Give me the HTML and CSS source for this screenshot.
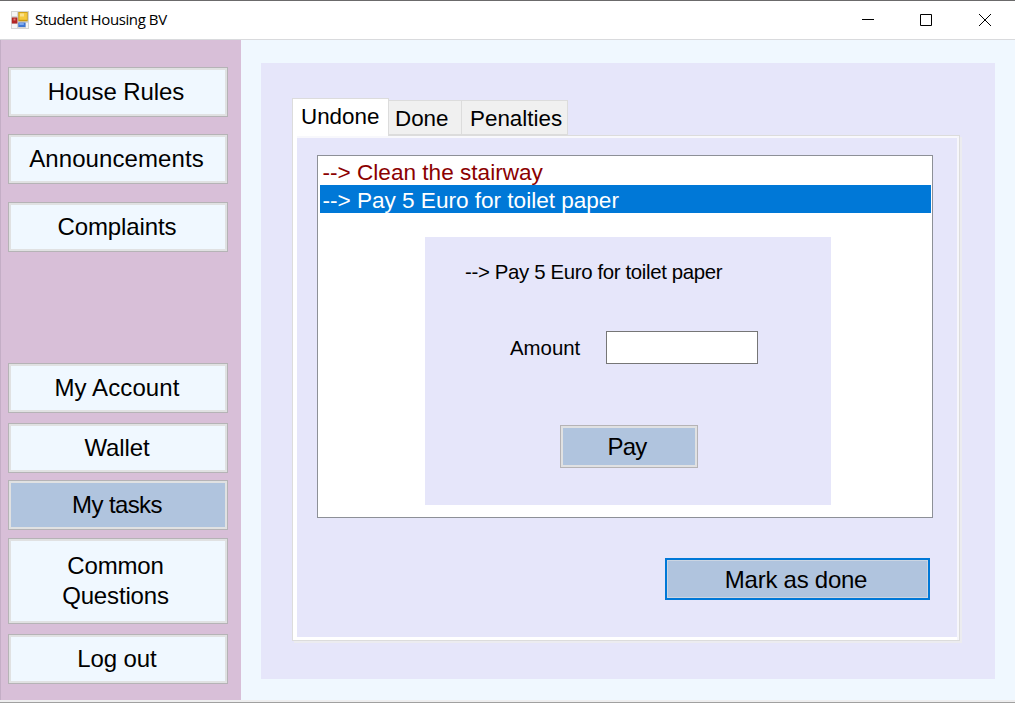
FILE: index.html
```
<!DOCTYPE html>
<html lang="en">
<head>
<meta charset="utf-8">
<title>Student Housing BV</title>
<link rel="stylesheet" href="styles.css">
</head>
<body>
<div class="window">
  <header class="titlebar">
    <svg class="app-icon" width="18" height="18" viewBox="0 0 18 18">
      <rect x="0" y="0" width="18" height="18" fill="#d4d4d4"/>
      <path d="M1 1h5v4H1zM1 13h5v4H1zM15 12h2v5h-2z" fill="#f5f5f5"/>
      <rect x=".8" y="6.5" width="5.6" height="6" fill="#b32424"/>
      <rect x="2.5" y="7.5" width="2" height="2" fill="#e27b72"/>
      <rect x="7.3" y="1" width="9.4" height="9.3" fill="#c99a10"/>
      <rect x="8.3" y="1.8" width="7.6" height="7" fill="#f5c93e"/>
      <rect x="9" y="2.5" width="4" height="3" fill="#fbe28c"/>
      <rect x="7.3" y="11.5" width="7.2" height="4.5" fill="#3f76d2"/>
      <rect x="8.3" y="12" width="4.5" height="2" fill="#7faaf0"/>
    </svg>
    <span class="title">Student Housing BV</span>
    <div class="controls">
      <svg width="12" height="12" viewBox="0 0 12 12"><path d="M0 5.5h12" class="stroke"/></svg>
      <svg width="12" height="12" viewBox="0 0 12 12"><path d="M.5.5h11v11H.5z" class="stroke"/></svg>
      <svg width="12" height="12" viewBox="0 0 12 12"><path d="M0 0l12 12M12 0L0 12" class="stroke"/></svg>
    </div>
  </header>
  <div class="body">
    <nav class="sidebar">
      <div class="group group-top">
        <button class="btn rules">House Rules</button>
        <button class="btn announcements">Announcements</button>
        <button class="btn">Complaints</button>
      </div>
      <div class="group group-bottom">
        <button class="btn account">My Account</button>
        <button class="btn wallet">Wallet</button>
        <button class="btn active tasks">My tasks</button>
        <button class="btn tall">Common<br>Questions</button>
        <button class="btn logout">Log out</button>
      </div>
    </nav>
    <main class="content">
      <section class="panel">
        <div class="tabs">
          <div class="tab selected">Undone</div>
          <div class="tab done">Done</div>
          <div class="tab penalties">Penalties</div>
        </div>
        <div class="page">
          <div class="list">
            <div class="item overdue">--&gt; Clean the stairway</div>
            <div class="item picked">--&gt; Pay 5 Euro for toilet paper</div>
            <div class="payment">
              <div class="pay-title">--&gt; Pay 5 Euro for toilet paper</div>
              <label class="amount"><span>Amount</span><input type="text"></label>
              <button class="btn active pay">Pay</button>
            </div>
          </div>
          <button class="btn mark">Mark as done</button>
        </div>
      </section>
    </main>
  </div>
</div>
</body>
</html>
```
FILE: styles.css
```
* { box-sizing: border-box; }
body { margin: 0; font-family: "Liberation Sans", Arial, sans-serif; color: #000; }
.window {
  width: 1015px; height: 703px; overflow: hidden;
  display: flex; flex-direction: column;
  border-top: 1px solid #6b6a6b; border-bottom: 1px solid #a0a0a0;
  background: #fff;
}
.titlebar {
  height: 39px; flex: none; display: flex; align-items: center;
  padding: 0 24px 0 11px; border-bottom: 1px solid #d9dadd;
}
.app-icon { flex: none; margin: -1px 6px 0 0; }
.title { font: 15px "Open Sans", "Noto Sans", sans-serif; letter-spacing: -0.4px; color: #000; white-space: nowrap; margin-top: -2px; }
.controls { margin-left: auto; display: flex; gap: 46px 47px; }
.controls svg { display: block; }
.controls svg:first-child { margin-right: -1px; }
.stroke { stroke: #000; stroke-width: 1; fill: none; }

.body { flex: 1; display: flex; min-height: 0; border-bottom: 2px solid #eeeeef; }
.sidebar {
  width: 241px; flex: none; background: #d8bfd8; border-left: 1px solid #c4aec6;
  padding: 27px 13px 0 7px; display: flex; flex-direction: column;
}
.group { display: flex; flex-direction: column; }
.group-top { gap: 17.4px; }
.group-bottom { margin-top: 111.2px; }
.btn {
  appearance: none; margin: 0; padding: 0 2px 0 0; border-radius: 0;
  height: 50px; flex: none; width: 100%;
  border: 1px solid #b5b3b6; outline: 0;
  box-shadow: inset 0 0 0 2px #e0e1e2;
  background: #f0f8ff; color: #000;
  font: 24px/30px "Liberation Sans", Arial, sans-serif; letter-spacing: -0.1px;
}
.rules { padding-right: 4px; }
.announcements { letter-spacing: 0.1px; padding-right: 3px; }
.group-bottom .btn { margin-bottom: 8px; }
.group-bottom .account { margin-bottom: 10px; letter-spacing: 0.1px; }
.group-bottom .wallet { margin-bottom: 7px; }
.group-bottom .tall { height: 86px; margin-bottom: 10px; letter-spacing: -0.15px; padding-right: 5px; }
.tasks { letter-spacing: -0.6px; }
.btn.active { background: #b0c4de; }

.content { flex: 1; background: #f0f8ff; padding: 23px 20px 21px; display: flex; }
.panel { flex: 1; background: #e6e6fa; padding: 35px 35px 38px 31px; display: flex; flex-direction: column; }
.tabs { height: 37px; flex: none; display: flex; align-items: flex-end; font-size: 22.4px; line-height: 36px; }
.tab { background: #f0f0f0; border: 1px solid #dcdcdc; height: 35px; white-space: nowrap; }
.tab.selected { width: 97px; height: 38px; margin-bottom: -1px; padding-left: 8px; background: #fff; border-bottom: 0; position: relative; z-index: 1; }
.tab.done { width: 73px; padding-left: 6px; border-left: 0; }
.tab.penalties { width: 106px; padding-left: 8px; border-left: 0; }
.page {
  flex: 1; border: 1px solid #dcdcdc; background: #e6e6fa;
  box-shadow: inset 4px 0 #fff, inset -2px 0 #f6f6fb, inset 0 2px #f8f8fc, inset 0 -3px #fff, 2px 2px #ececf0;
  padding: 19px 26px 0 24px; display: flex; flex-direction: column; align-items: flex-start;
}
.list { width: 616px; height: 363px; flex: none; background: #fff; border: 1px solid #8d9097; padding: 1px 1px 1px 2px; }
.item { height: 28px; padding-left: 2.5px; font-size: 22.6px; line-height: 32px; white-space: nowrap; }
.overdue { color: #8b0000; }
.picked { background: #0078d7; color: #fff; line-height: 31px; letter-spacing: -0.02px; }
.payment {
  width: 406px; height: 268px; margin: 24px 0 0 105px; background: #e6e6fa;
  display: flex; flex-direction: column; align-items: center; padding-top: 22px;
}
.pay-title { align-self: flex-start; margin-left: 40px; font-size: 20.4px; line-height: 26px; letter-spacing: -0.35px; white-space: nowrap; }
.amount { align-self: flex-start; margin: 46px 0 0 85px; display: flex; align-items: center; font-size: 20.4px; }
.amount span { width: 96px; padding-top: 1px; }
.amount input { width: 152px; height: 33px; border: 1px solid #767676; border-radius: 0; padding: 0; background: #fff; }
.pay { width: 138px; height: 43px; margin: 61px 0 0 2px; padding-right: 4px; letter-spacing: -0.8px; }
.mark { align-self: flex-end; width: 265px; height: 42px; margin: 40px 3px 0 0; border: 2px solid #0078d7; background: #b0c4de; box-shadow: inset 0 0 0 1px #cbd5e2; padding: 1px 3px 0 0; letter-spacing: -0.25px; }
```
